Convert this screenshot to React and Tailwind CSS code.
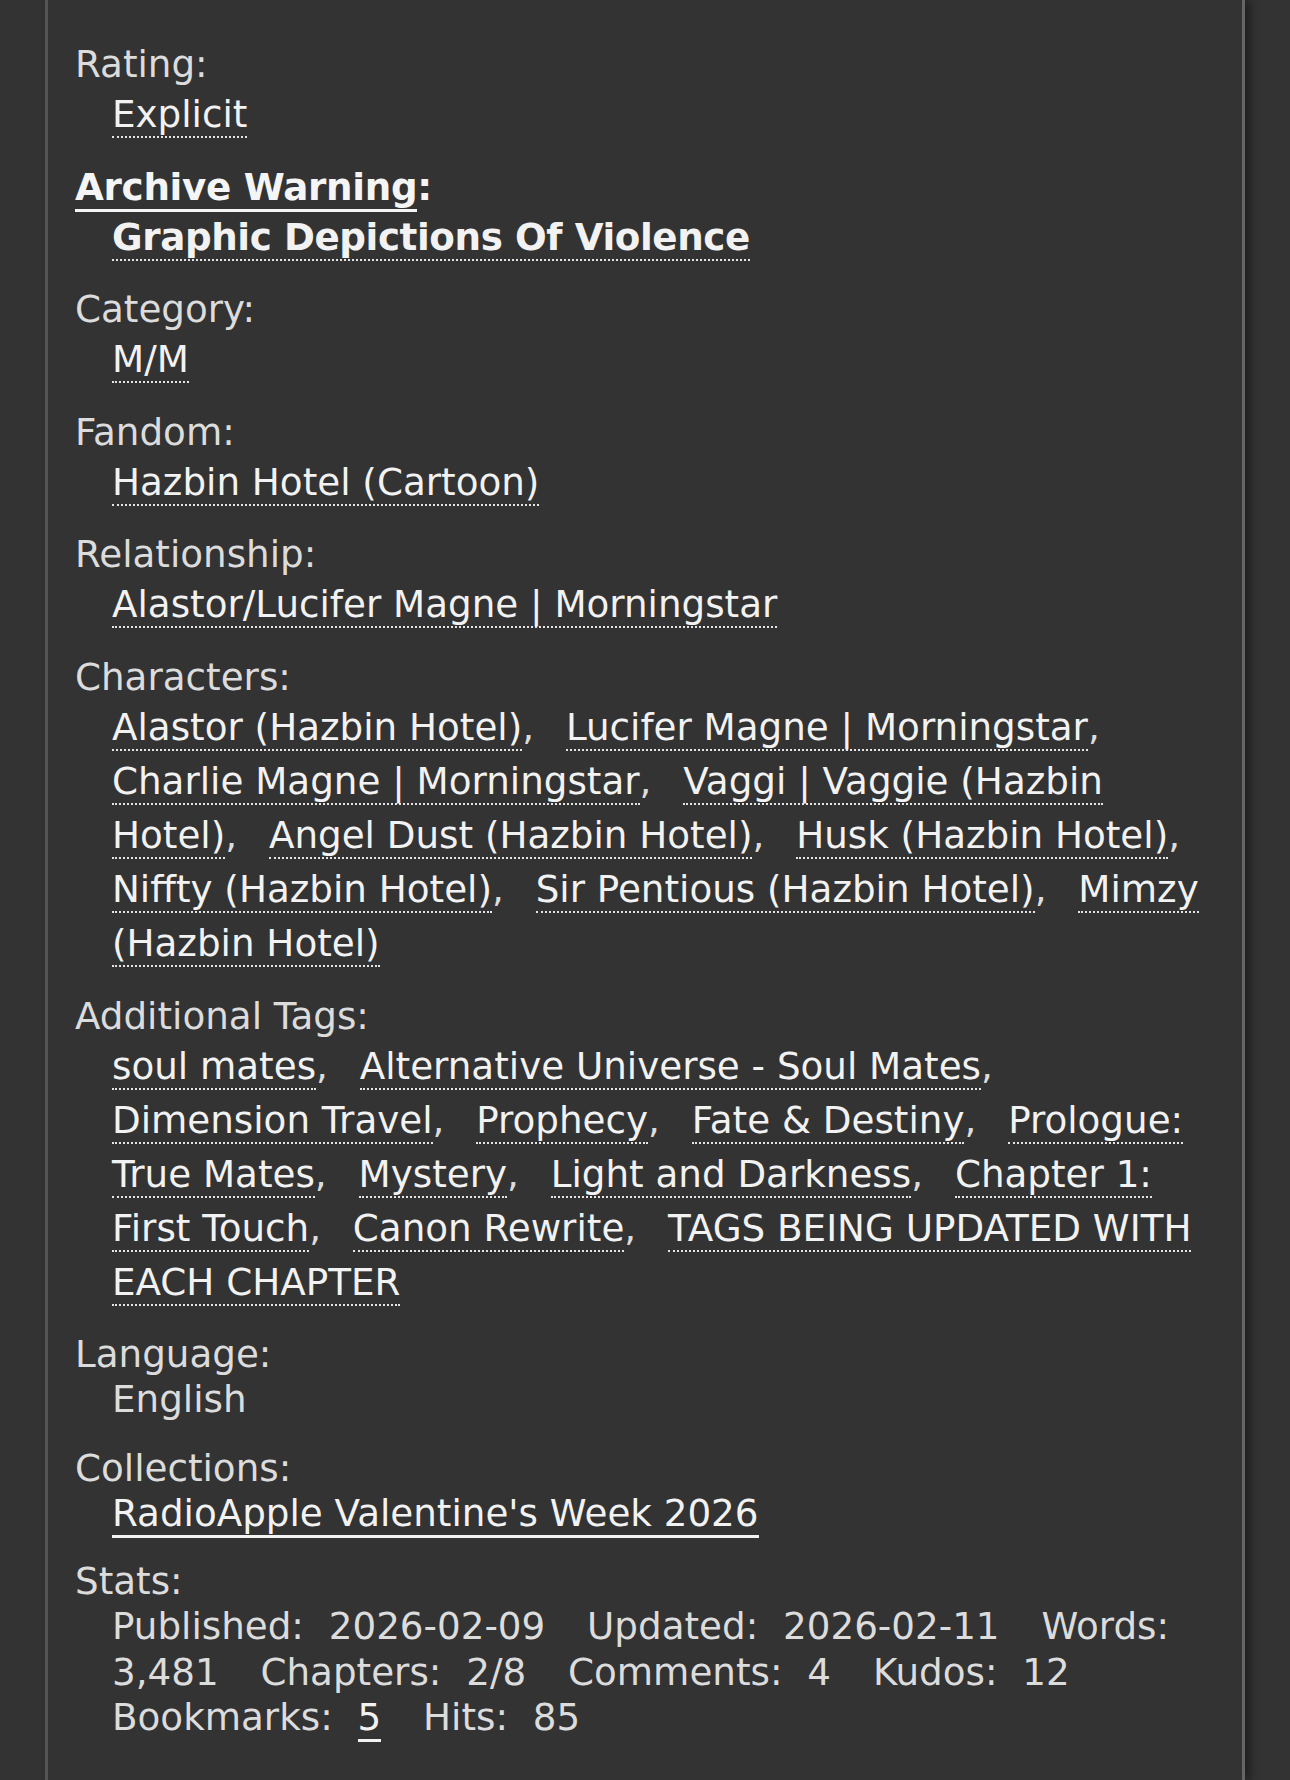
import React from 'react';

const characters = [
  'Alastor (Hazbin Hotel)',
  'Lucifer Magne | Morningstar',
  'Charlie Magne | Morningstar',
  'Vaggi | Vaggie (Hazbin Hotel)',
  'Angel Dust (Hazbin Hotel)',
  'Husk (Hazbin Hotel)',
  'Niffty (Hazbin Hotel)',
  'Sir Pentious (Hazbin Hotel)',
  'Mimzy (Hazbin Hotel)',
];

const freeforms = [
  'soul mates',
  'Alternative Universe - Soul Mates',
  'Dimension Travel',
  'Prophecy',
  'Fate & Destiny',
  'Prologue: True Mates',
  'Mystery',
  'Light and Darkness',
  'Chapter 1: First Touch',
  'Canon Rewrite',
  'TAGS BEING UPDATED WITH EACH CHAPTER',
];

const Tag = ({ children, bold }) => (
  <a
    href="#"
    className={`text-[#f2f2f2] border-b-2 border-dotted border-[#e5e5e5] ${bold ? 'font-bold tracking-[-0.4px]' : ''}`}
  >
    {children}
  </a>
);

const TagList = ({ tags }) => (
  <dd className="pl-[37px] leading-[54px] mb-[23.6px]">
    {tags.map((t, i) => (
      <span key={t} className={i < tags.length - 1 ? 'mr-[20px]' : ''}>
        <Tag>{t}</Tag>
        {i < tags.length - 1 ? ', ' : ''}
      </span>
    ))}
  </dd>
);

const Label = ({ children }) => <dt className="leading-[45px]">{children}</dt>;

const Stat = ({ label, children }) => (
  <>
    <span className="mr-[13px]">{label}:</span>{' '}
    <span className="mr-[30px]">{children}</span>{' '}
  </>
);

export default function App() {
  return (
    <div
      className="min-h-[1780px] bg-[#333] text-[37.25px] text-[#dcdcdc]"
      style={{ fontFamily: '"DejaVu Sans", Verdana, sans-serif' }}
    >
      <div className="ml-[45px] w-[1200px] min-h-[1780px] border-l-[3px] border-r-[3px] border-l-[#555] border-r-[#666] shadow-[6px_0_8px_rgba(0,0,0,0.35)] pt-[42px] pl-[27px] pr-[24px]">
        <dl>
          <Label>Rating:</Label>
          <TagList tags={['Explicit']} />

          <dt className="leading-[45px] font-bold tracking-[-0.3px] text-[#f5f5f5]">
            <a href="#" className="border-b-[3px] border-[#f5f5f5]">Archive Warning</a>:
          </dt>
          <dd className="pl-[37px] leading-[54px] mb-[23.6px]">
            <Tag bold>Graphic Depictions Of Violence</Tag>
          </dd>

          <Label>Category:</Label>
          <TagList tags={['M/M']} />

          <Label>Fandom:</Label>
          <TagList tags={['Hazbin Hotel (Cartoon)']} />

          <Label>Relationship:</Label>
          <TagList tags={['Alastor/Lucifer Magne | Morningstar']} />

          <Label>Characters:</Label>
          <TagList tags={characters} />

          <Label>Additional Tags:</Label>
          <TagList tags={freeforms} />

          <Label>Language:</Label>
          <dd className="pl-[37px] leading-[45px] mb-[23.6px]">English</dd>

          <Label>Collections:</Label>
          <dd className="pl-[37px] leading-[45px] mb-[23.6px]">
            <a href="#" className="text-[#f2f2f2] border-b-[3px] border-[#f2f2f2]">
              RadioApple Valentine's Week 2026
            </a>
          </dd>

          <Label>Stats:</Label>
          <dd className="pl-[37px] leading-[45.5px]">
            <Stat label="Published">2026-02-09</Stat>
            <Stat label="Updated">2026-02-11</Stat>
            <Stat label="Words">3,481</Stat>
            <Stat label="Chapters">2/8</Stat>
            <Stat label="Comments">4</Stat>
            <Stat label="Kudos">12</Stat>
            <Stat label="Bookmarks">
              <a href="#" className="text-[#f2f2f2] border-b-[3px] border-[#f2f2f2]">5</a>
            </Stat>
            <Stat label="Hits">85</Stat>
          </dd>
        </dl>
      </div>
    </div>
  );
}
